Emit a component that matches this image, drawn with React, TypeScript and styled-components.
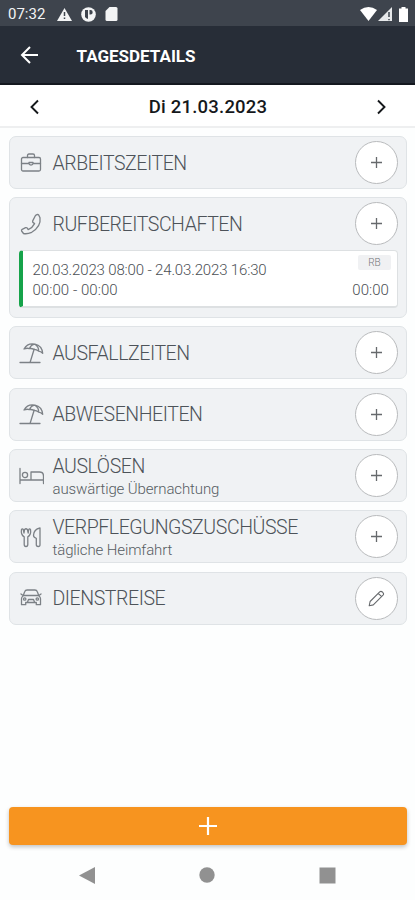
import React from 'react';
import styled, { createGlobalStyle } from 'styled-components';

const GlobalStyle = createGlobalStyle`
  * { box-sizing: border-box; }
  body { margin: 0; background: #fdfefe; font-family: Roboto, "Liberation Sans", sans-serif; }
  button { font: inherit; padding: 0; border: 0; background: none; }
  svg { display: block; flex: none; }
`;

const Screen = styled.main`
  width: 415px;
  height: 900px;
  display: flex;
  flex-direction: column;
  overflow: hidden;
`;

const StatusBar = styled.div`
  height: 26px;
  flex: none;
  padding: 2px 6px 0 8px;
  display: flex;
  align-items: center;
  justify-content: space-between;
  background: #3e444d;
  color: #f3f4f5;
`;

const StatusGroup = styled.div<{ $gap: number }>`
  display: flex;
  align-items: center;
  gap: ${p => p.$gap}px;
`;

const Clock = styled.span`
  font-size: 15px;
  line-height: 18px;
  width: 40px;
  white-space: nowrap;
`;

const AppBar = styled.header`
  height: 59px;
  flex: none;
  display: flex;
  align-items: center;
  gap: 37.5px;
  padding: 2px 20px 2px;
  background: #272d37;
  border-bottom: 2px solid #14181f;
  color: #fff;
`;

const AppTitle = styled.h1`
  margin: 2px 0 0;
  font-size: 17px;
  font-weight: 700;
  line-height: 22px;
`;

const DateBar = styled.nav`
  height: 43px;
  flex: none;
  display: flex;
  align-items: center;
  justify-content: space-between;
  padding: 2px 26px 0 27px;
  background: #fff;
  border-bottom: 2px solid #eeeff0;
  color: #15181b;
`;

const DateLabel = styled.span`
  font-size: 18.5px;
  font-weight: 500;
  line-height: 22px;
  letter-spacing: 0.22px;
`;

const CardList = styled.div`
  flex: 1;
  display: flex;
  flex-direction: column;
  gap: 8.35px;
  padding: 8px 8px 0 9px;
`;

const Card = styled.section<{ $expanded?: boolean }>`
  height: ${p => (p.$expanded ? 120.7 : 53)}px;
  flex: none;
  border: 1px solid #dfe3e6;
  border-radius: 7px;
  background: #f0f2f4;
`;

const CardHeader = styled.div`
  height: 51px;
  display: flex;
  align-items: center;
  padding: 0 8px;
`;

const IconSlot = styled.div`
  width: 26px;
  height: 26px;
  margin-right: 8.5px;
  color: #7c8186;
`;

const CardText = styled.div<{ $double: boolean }>`
  flex: 1;
  display: flex;
  flex-direction: column;
  padding-top: ${p => (p.$double ? 3 : 1)}px;
  white-space: nowrap;
`;

const CardTitle = styled.h2`
  margin: 0;
  font-size: 19.5px;
  line-height: 23px;
  font-weight: 300;
  letter-spacing: -0.43px;
  color: #4d5359;
`;

const CardSubtitle = styled.span`
  font-size: 15px;
  line-height: 19px;
  margin-top: 2px;
  font-weight: 300;
  letter-spacing: -0.12px;
  color: #565c62;
`;

const RoundButton = styled.button`
  width: 43px;
  height: 43px;
  flex: none;
  display: flex;
  align-items: center;
  justify-content: center;
  border: 1px solid #b9bbbd;
  border-radius: 50%;
  background: #fff;
  color: #66696c;
`;

const Entry = styled.div`
  height: 58px;
  margin: 1px 8px 0 9px;
  padding: 9px 7px 0 9.5px;
  display: grid;
  grid-template-columns: 1fr auto;
  grid-template-rows: 20px 20px;
  background: #fff;
  border: 1px solid #dde0e2;
  border-bottom-width: 2px;
  border-left: 4px solid #16a34a;
  border-radius: 4px;
  font-size: 15px;
  font-weight: 300;
  line-height: 20px;
  color: #4b5055;
`;

const Period = styled.span`
  letter-spacing: -0.15px;
`;

const Hours = styled.span`
  letter-spacing: 0.05px;
  margin-right: 1px;
`;

const Tag = styled.span`
  width: 33px;
  height: 15px;
  justify-self: end;
  margin: -5px -1px 0 0;
  border-radius: 2px;
  background: #f0f1f3;
  color: #74777a;
  font-size: 10px;
  line-height: 16px;
  text-align: center;
`;

const AddButton = styled.button`
  height: 38px;
  flex: none;
  margin: 0 8px 0 9px;
  display: flex;
  align-items: center;
  justify-content: center;
  border-radius: 4px;
  background: #f7941f;
  box-shadow: 0 2px 4px rgba(0, 0, 0, 0.24);
  color: #fff;
`;

const SystemNav = styled.footer`
  height: 55px;
  flex: none;
  display: flex;
  align-items: center;
  justify-content: space-between;
  padding: 5px 79px 0 79px;
  color: #919191;
`;

type IconName = 'briefcase' | 'phone' | 'umbrella' | 'bed' | 'cutlery' | 'car';

const drawings: Record<IconName, React.ReactNode> = {
  briefcase: (
    <>
      <rect x="3.5" y="7.5" width="19" height="13.5" rx="1.5" />
      <path d="M9.5 7.5V5.5q0-1.500 1.500-1.500h4q1.500 0 1.500 1.500v2M3.500 13.500h7M15.500 13.500h7M11 12.500v1q0 1.500 2 1.500t2-1.500v-1z" />
    </>
  ),
  phone: (
    <path d="M17.600 4.300l1.300-.6q1.100-.5 1.900.5l1.200 2.500q1.300 8.800-8.300 14.600-4.500 2-8.200 1.200L3.600 20q-.5-1.200.6-1.700l3.400-1.600q1-.4 1.700.5l.9 1.500q4.200-1.800 6.400-6.100l-1.400-1q-.9-.6-.5-1.700z" />
  ),
  umbrella: (
    <>
      <path d="M2 22.500h20M12.200 22l4-13" />
      <path d="M6 9C8.200 5.200 12.500 3.200 17 4.200c4.500 1 7.300 4.900 7.700 9.100q-2-2-4.200-2.200-1.800-1.600-4.500-1.800-2.600-1.200-4.500-.6Q8.900 7.700 6 9zM17 4.200Q12.800 4.800 11.500 8.700M17 4.200q4.200 2.900 3.500 6.900" />
    </>
  ),
  bed: (
    <>
      <path d="M2 5.500v15M2 17h23.500M25.500 20.500v-7.500Q25.500 9 21.500 9h-8.500v8" />
      <circle cx="7" cy="12" r="2.600" />
    </>
  ),
  cutlery: (
    <>
      <path d="M3.500 5.500c-.7 3.900.1 5.900 2.700 7.400v7.700q0 1.900 1.800 1.900t1.800-1.900v-7.700c2.600-1.500 3.400-3.500 2.700-7.400q-1-1.200-1.800.2l-.5 3.300-.8-3.500Q8 4 6.600 5.500l-.6 3.500-.7-3.500q-.9-1.200-1.800 0z" />
      <path d="M22 4q-6.200 1.200-6.500 7.300 0 2.200 2.800 3v6.400q0 1.800 1.900 1.800t1.800-1.800z" />
    </>
  ),
  car: (
    <>
      <path d="M5 11l1.800-4.500q.5-1.500 2.300-1.500h7.800q1.800 0 2.300 1.500L21 11q1.500 1 1.500 2.700v6h-4.200v-2.200H7.700v2.200H3.500v-6Q3.500 12 5 11zM5.500 10.500h15M5 10.500L3 9M21 10.500L23 9M9.500 17l1-2.500h5l1 2.500" />
      <circle cx="6.700" cy="14" r="1.200" />
      <circle cx="19.300" cy="14" r="1.200" />
    </>
  ),
};

const LineIcon = ({ name }: { name: IconName }) => (
  <svg width="26" height="26" viewBox="0 0 26 26" fill="none" stroke="currentColor" strokeWidth="1.3" strokeLinecap="round" strokeLinejoin="round">
    {drawings[name]}
  </svg>
);

const PlusIcon = ({ size, weight }: { size: number; weight: number }) => (
  <svg width={size} height={size} viewBox={`0 0 ${size} ${size}`} stroke="currentColor" strokeWidth={weight}>
    <path d={`M0 ${size / 2}H${size}M${size / 2} 0V${size}`} />
  </svg>
);

const PencilIcon = () => (
  <svg width="17" height="17" viewBox="0 0 17 17" fill="none" stroke="currentColor" strokeWidth="1.1" strokeLinejoin="round">
    <path d="M1.200 15.800l.9-4.300 9.600-9.600q1.300-1.200 2.700.1l.7.800q1 1.200-.1 2.400l-9.700 9.700zM10.300 3.300l3.500 3.500" />
  </svg>
);

const Chevron = ({ right }: { right?: boolean }) => (
  <svg width="15" height="16" viewBox="0 0 15 16" fill="none" stroke="currentColor" strokeWidth="1.9">
    <path d={right ? 'M4 1.500l6.500 6.500L4 14.500' : 'M11 1.500L4.500 8l6.500 6.500'} />
  </svg>
);

const sections: { icon: IconName; title: string; subtitle?: string; edit?: boolean; entry?: boolean }[] = [
  { icon: 'briefcase', title: 'ARBEITSZEITEN' },
  { icon: 'phone', title: 'RUFBEREITSCHAFTEN', entry: true },
  { icon: 'umbrella', title: 'AUSFALLZEITEN' },
  { icon: 'umbrella', title: 'ABWESENHEITEN' },
  { icon: 'bed', title: 'AUSLÖSEN', subtitle: 'auswärtige Übernachtung' },
  { icon: 'cutlery', title: 'VERPFLEGUNGSZUSCHÜSSE', subtitle: 'tägliche Heimfahrt' },
  { icon: 'car', title: 'DIENSTREISE', edit: true },
];

export default function App() {
  return (
    <Screen>
      <GlobalStyle />
      <StatusBar>
        <StatusGroup $gap={9}>
          <Clock>07:32</Clock>
          <svg width="15" height="15" viewBox="0 0 15 15"><path d="M7.500 1L15 14H0z" fill="currentColor" /><path d="M7.500 5v4M7.500 10.500v1.500" stroke="#3e444d" strokeWidth="1.500" /></svg>
          <svg width="15" height="15" viewBox="0 0 15 15"><circle cx="7.500" cy="7.500" r="7.300" fill="currentColor" /><path d="M4 3h3v9a5 5 0 0 1-3-2zM8.500 3h1a2.200 2.200 0 0 1 0 4.400h-1z" fill="#3e444d" /></svg>
          <svg width="13" height="14" viewBox="0 0 13 14"><path d="M4.500 0H11q1.500 0 1.500 1.500v11Q12.500 14 11 14H2Q.5 14 .5 12.500V4z" fill="currentColor" /></svg>
        </StatusGroup>
        <StatusGroup $gap={1}>
          <svg width="17" height="14" viewBox="0 0 17 14"><path d="M0 3Q8.500-3 17 3L8.500 14z" fill="#fff" /></svg>
          <svg width="14" height="14" viewBox="0 0 14 14"><path d="M14 0v14H0z" fill="#e7e9eb" /><path d="M11 5v5M11 12v1.200" stroke="#3e444d" strokeWidth="1.500" /></svg>
          <svg width="16" height="15" viewBox="0 0 16 15"><path d="M8.500 0h4v1.500H15V15H6V1.500h2.500z" fill="#fff" /></svg>
        </StatusGroup>
      </StatusBar>
      <AppBar>
        <svg width="19" height="18" viewBox="0 0 19 18" fill="none" stroke="currentColor" strokeWidth="2"><path d="M18 9H2M10 1L2 9l8 8" /></svg>
        <AppTitle>TAGESDETAILS</AppTitle>
      </AppBar>
      <DateBar>
        <Chevron />
        <DateLabel>Di 21.03.2023</DateLabel>
        <Chevron right />
      </DateBar>
      <CardList>
        {sections.map(s => (
          <Card key={s.title} $expanded={s.entry}>
            <CardHeader>
              <IconSlot><LineIcon name={s.icon} /></IconSlot>
              <CardText $double={!!s.subtitle}>
                <CardTitle>{s.title}</CardTitle>
                {s.subtitle && <CardSubtitle>{s.subtitle}</CardSubtitle>}
              </CardText>
              <RoundButton aria-label={s.title}>
                {s.edit ? <PencilIcon /> : <PlusIcon size={11} weight={1.3} />}
              </RoundButton>
            </CardHeader>
            {s.entry && (
              <Entry>
                <Period>20.03.2023 08:00 - 24.03.2023 16:30</Period>
                <Tag>RB</Tag>
                <Hours>00:00 - 00:00</Hours>
                <Hours>00:00</Hours>
              </Entry>
            )}
          </Card>
        ))}
      </CardList>
      <AddButton aria-label="Hinzufügen"><PlusIcon size={18} weight={2.2} /></AddButton>
      <SystemNav>
        <svg width="16" height="17" viewBox="0 0 16 17"><path d="M16 0v17L0 8.500z" fill="currentColor" /></svg>
        <svg width="16" height="16" viewBox="0 0 16 16"><circle cx="8" cy="8" r="7.700" fill="currentColor" /></svg>
        <svg width="17" height="17" viewBox="0 0 17 17"><rect x=".5" y=".5" width="16" height="16" fill="currentColor" /></svg>
      </SystemNav>
    </Screen>
  );
}
